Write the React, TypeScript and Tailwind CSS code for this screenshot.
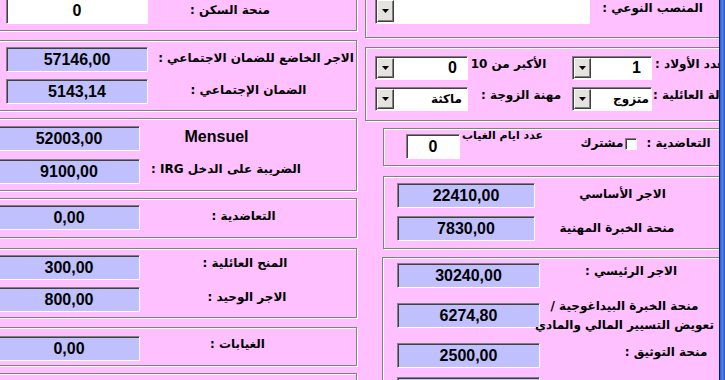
import React from "react"

const num = "font-['Liberation_Sans',Arial,sans-serif] font-bold text-[16px] leading-none text-black"
const ar = "font-['DejaVu_Sans','Liberation_Sans',sans-serif] font-bold text-[12px] leading-[16px] text-black"
const sunken = "border border-t-[#808080] border-l-[#808080] border-r-white border-b-white shadow-[inset_1px_1px_0_#404040]"
const etched = "border border-[#808080] shadow-[inset_1px_1px_0_#fff,1px_1px_0_#fff]"

function Num({ v, className = "" }: { v: string; className?: string }) {
  return (
    <div className={`h-[25px] shrink-0 flex items-center justify-center bg-[#c0c0ff] ${sunken} ${num} ${className}`}>
      {v}
    </div>
  )
}

function Lbl({ t, className = "" }: { t: string; className?: string }) {
  return (
    <div dir="rtl" className={`shrink-0 flex justify-center whitespace-nowrap ${ar} ${className}`}>
      {t}
    </div>
  )
}

function Combo({ v, arabic, className = "", textClass = "pr-[10px]" }: { v: string; arabic?: boolean; className?: string; textClass?: string }) {
  return (
    <div className={`shrink-0 flex bg-white ${sunken} ${className}`}>
      <div className="w-[17px] ml-[1px] my-[1px] flex items-center justify-center bg-[#e6e3de] border border-t-white border-l-white border-r-[#404040] border-b-[#404040] shadow-[inset_-1px_-1px_0_#808080]">
        <svg width="7" height="4" viewBox="0 0 7 4">
          <path d="M0 0h7L3.5 4z" fill="#000" />
        </svg>
      </div>
      <div dir="rtl" className={`flex-1 flex items-center whitespace-nowrap ${arabic ? ar : num} ${textClass}`}>
        {v}
      </div>
    </div>
  )
}

export default function App() {
  return (
    <div className="w-[725px] h-[380px] overflow-hidden bg-[#ffc0ff] flex">
      {/* left column */}
      <div className="w-[367px] -ml-[10px] -mt-[12px] shrink-0 flex flex-col">
        <div className={`h-[43px] shrink-0 ${etched}`}>
          <div className="flex items-start mt-[9px]">
            <div className={`w-[142px] h-[26px] ml-[15px] shrink-0 flex items-center justify-center bg-white ${sunken} ${num}`}>0</div>
            <Lbl t="منحة السكن :" className="w-[70px] ml-[47px] mt-[4px]" />
          </div>
        </div>

        <div className={`h-[71px] mt-[9px] shrink-0 ${etched}`}>
          <div className="flex items-start mt-[6px]">
            <Num v="57146,00" className="w-[142px] ml-[15px]" />
            <Lbl t="الاجر الخاضع للضمان الاجتماعي :" className="w-[172px] ml-[22px] mt-[3px]" />
          </div>
          <div className="flex items-start mt-[7px]">
            <Num v="5143,14" className="w-[142px] ml-[15px]" />
            <Lbl t="الضمان الإجتماعي :" className="w-[107px] ml-[47px] mt-[3px]" />
          </div>
        </div>

        <div className={`h-[73px] mt-[7px] shrink-0 ${etched}`}>
          <div className="flex items-start mt-[7px]">
            <Num v="52003,00" className="w-[142px] ml-[7px] h-[24px]" />
            <div className={`w-[63px] ml-[45px] mt-[3px] flex justify-center ${num}`}>Mensuel</div>
          </div>
          <div className="flex items-start mt-[8px]">
            <Num v="9100,00" className="w-[142px] ml-[7px] h-[24px]" />
            <Lbl t="الضريبة على الدخل IRG :" className="w-[142px] ml-[15px] mt-[2px]" />
          </div>
        </div>

        <div className={`h-[40px] mt-[7px] shrink-0 ${etched}`}>
          <div className="flex items-start mt-[6px]">
            <Num v="0,00" className="w-[142px] ml-[7px]" />
            <Lbl t="التعاضدية :" className="w-[57px] ml-[75px] mt-[3px]" />
          </div>
        </div>

        <div className={`h-[70px] mt-[10px] shrink-0 ${etched}`}>
          <div className="flex items-start mt-[6px]">
            <Num v="300,00" className="w-[142px] ml-[7px]" />
            <Lbl t="المنح العائلية :" className="w-[60px] ml-[75px]" />
          </div>
          <div className="flex items-start mt-[7px]">
            <Num v="800,00" className="w-[142px] ml-[7px] h-[24px]" />
            <Lbl t="الاجر الوحيد :" className="w-[58px] ml-[78px] mt-[2px]" />
          </div>
        </div>

        <div className={`h-[39px] mt-[9px] shrink-0 ${etched}`}>
          <div className="flex items-start mt-[8px]">
            <Num v="0,00" className="w-[142px] ml-[7px]" />
            <Lbl t="الغيابات :" className="w-[49px] ml-[73px]" />
          </div>
        </div>

        <div className={`h-[40px] mt-[7px] shrink-0 ${etched}`} />
      </div>

      {/* right column */}
      <div className="w-[354px] ml-[8px] -mt-[12px] shrink-0 overflow-hidden flex flex-col">
        <div className={`w-[380px] h-[50px] shrink-0 ${etched}`}>
          <div className="flex items-start mt-[9px]">
            <Combo v="" className="w-[215px] h-[26px] ml-[9px]" />
            <Lbl t="المنصب النوعي :" className="w-[95px] ml-[15px] mt-[2px]" />
          </div>
        </div>

        <div className={`w-[380px] h-[74px] mt-[9px] shrink-0 ${etched}`}>
          <div className="flex items-start mt-[8px]">
            <Combo v="0" className="w-[93px] h-[24px] ml-[9px]" />
            <Lbl t="الأكبر من 10" className="w-[67px] ml-[7px]" />
            <Combo v="1" className="w-[80px] h-[24px] ml-[30px]" />
            <div className="ml-[3px] flex justify-start whitespace-nowrap">
              <span dir="rtl" className={ar}>عدد الأولاد :</span>
            </div>
          </div>
          <div className="flex items-start mt-[7px]">
            <Combo v="ماكثة" arabic textClass="pr-[5px]" className="w-[93px] h-[24px] ml-[9px]" />
            <Lbl t="مهنة الزوجة :" className="w-[82px] ml-[12px]" />
            <Combo v="متزوج" arabic textClass="pr-[2px]" className="w-[80px] h-[24px] ml-[10px]" />
            <div className="ml-[1px] flex justify-start whitespace-nowrap">
              <span dir="rtl" className={ar}>الحالة العائلية :</span>
            </div>
          </div>
        </div>

        <div className={`w-[360px] h-[38px] mt-[7px] ml-[18px] shrink-0 ${etched}`}>
          <div className="flex items-start">
            <div className={`w-[54px] h-[25px] ml-[22px] mt-[5px] shrink-0 flex items-center justify-center bg-white ${sunken} ${num}`}>0</div>
            <div dir="rtl" className="w-[65px] ml-[10px] mt-[1px] shrink-0 flex justify-center whitespace-nowrap font-['DejaVu_Sans',sans-serif] font-bold text-[11px] leading-[12px] text-black">
              عدد ايام الغياب
            </div>
            <Lbl t="مشترك" className="w-[40px] ml-[47px] mt-[6px]" />
            <div className={`w-[12px] h-[12px] ml-[3px] mt-[9px] shrink-0 bg-white ${sunken}`} />
            <Lbl t="التعاضدية :" className="w-[75px] ml-[4px] mt-[6px]" />
          </div>
        </div>

        <div className={`w-[360px] h-[73px] mt-[10px] ml-[18px] shrink-0 ${etched}`}>
          <div className="flex items-start mt-[6px]">
            <Num v="22410,00" className="w-[138px] ml-[13px]" />
            <Lbl t="الاجر الأساسي" className="w-[79px] ml-[48px] mt-[3px]" />
          </div>
          <div className="flex items-start mt-[8px]">
            <Num v="7830,00" className="w-[138px] ml-[13px]" />
            <Lbl t="منحة الخبرة المهنية" className="w-[106px] ml-[29px] mt-[4px]" />
          </div>
        </div>

        <div className={`w-[360px] h-[160px] mt-[8px] ml-[17px] shrink-0 ${etched}`}>
          <div className="flex items-start mt-[5px]">
            <Num v="30240,00" className="w-[143px] ml-[14px]" />
            <Lbl t="الاجر الرئيسي :" className="w-[82px] ml-[50px]" />
          </div>
          <div className="flex items-center mt-[15px]">
            <Num v="6274,80" className="w-[143px] ml-[14px]" />
            <div dir="rtl" className={`w-[149px] ml-[10px] -my-[7px] shrink-0 flex flex-col items-center whitespace-nowrap ${ar} leading-[19px]`}>
              <span>منحة الخبرة البيداغوجية /</span>
              <span>تعويض التسيير المالي والمادي</span>
            </div>
          </div>
          <div className="flex items-start mt-[15px]">
            <Num v="2500,00" className="w-[143px] ml-[14px]" />
            <Lbl t="منحة التوثيق :" className="w-[54px] ml-[99px] mt-[1px]" />
          </div>
          <div className="flex items-start mt-[9px]">
            <Num v="" className="w-[143px] ml-[14px]" />
            <Lbl t="منحة المردودية :" className="w-[82px] ml-[50px] mt-[1px]" />
          </div>
        </div>
      </div>

      <div className="w-[6px] shrink-0 border-l border-[#0a1f60] bg-linear-to-r from-[#2c5ed4] via-[#4a84ec] to-[#2656c8]" />
    </div>
  )
}
